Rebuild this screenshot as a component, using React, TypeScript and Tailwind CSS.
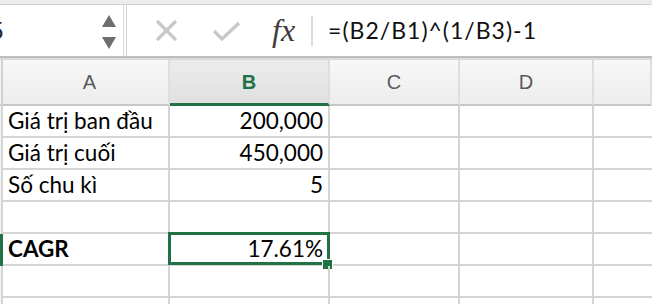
const cellFont = "font-['Lato','Open_Sans',sans-serif]";

const rows: { a: string; b: string; bold?: boolean; selected?: boolean }[] = [
  { a: "Giá trị ban đầu", b: "200,000" },
  { a: "Giá trị cuối", b: "450,000" },
  { a: "Số chu kì", b: "5" },
  { a: "", b: "" },
  { a: "CAGR", b: "17.61%", bold: true, selected: true },
  { a: "", b: "" },
  { a: "", b: "" },
];

function Toolbar() {
  return (
    <div className="flex flex-col">
      <div className="h-[4px] bg-[#ececec]" />
      <div className="flex h-[52px] border-t border-[#d0d0d0] bg-white">
        {/* name box, scrolled so only the tail of the ref shows */}
        <div className="relative flex w-[124px] items-center overflow-hidden border-r border-[#d8d8d8]">
          <span className="ml-[-10px] font-['Liberation_Sans',sans-serif] text-[24px] text-[#222]">5</span>
          <div className="absolute left-[102px] top-[10px] flex flex-col gap-[10px]">
            <svg width="14" height="12" viewBox="0 0 14 12">
              <path d="M7 0 L14 12 L0 12 Z" fill="#6e6e6e" />
            </svg>
            <svg width="14" height="12" viewBox="0 0 14 12">
              <path d="M0 0 L14 0 L7 12 Z" fill="#6e6e6e" />
            </svg>
          </div>
        </div>
        <div className="ml-[2px] flex flex-1 items-center border-l border-[#d8d8d8]">
          <svg className="ml-[28px]" width="23" height="23" viewBox="0 0 23 23">
            <path d="M2 2 L21 21 M21 2 L2 21" stroke="#c8c8c8" strokeWidth="3.2" />
          </svg>
          <svg className="ml-[34px]" width="29" height="22" viewBox="0 0 29 22">
            <path d="M2 11 L10 19 L27 3" stroke="#c8c8c8" strokeWidth="3.4" fill="none" />
          </svg>
          <span className="ml-[31px] mt-[-2px] font-['Liberation_Serif',serif] text-[32px] italic leading-none text-[#3c3c3c]">
            fx
          </span>
          <div className="ml-[16px] h-[30px] w-[2px] bg-[#dcdcdc]" />
          <span className={`ml-[15px] ${cellFont} text-[23px] tracking-[1px] text-[#111]`}>=(B2/B1)^(1/B3)-1</span>
        </div>
      </div>
      <div className="h-[2px] bg-[#bdbdbd]" />
      <div className="h-[2px] bg-[#dadada]" />
    </div>
  );
}

function HeaderCell({ label, w, active, pad }: { label: string; w: string; active?: boolean; pad?: string }) {
  return (
    <div
      className={`${w} flex h-[46px] shrink-0 items-center justify-center border-r-2 border-[#dedede] ${pad ?? ""} ${
        active
          ? "border-b-[3px] border-b-[#217346] bg-gradient-to-b from-[#ececec] to-[#e0e0e0] font-bold text-[#217346]"
          : "border-b-2 border-b-[#c6c6c6] bg-gradient-to-b from-[#f7f7f7] to-[#ededed] text-[#5a5a5a]"
      } font-['Liberation_Sans',sans-serif] text-[20px]`}
    >
      {label}
    </div>
  );
}

export default function App() {
  return (
    <div className="h-[304px] w-[652px] overflow-hidden bg-white">
      <Toolbar />
      <div className="flex">
        <div className="h-[46px] w-[3px] shrink-0 border-r-2 border-b-2 border-[#d0d0d0] bg-[#f4f4f4]" />
        <HeaderCell label="A" w="w-[167px]" pad="pl-[8px]" />
        <HeaderCell label="B" w="w-[160px]" active />
        <HeaderCell label="C" w="w-[130px]" />
        <HeaderCell label="D" w="w-[134px]" />
        <HeaderCell label="" w="flex-1" />
      </div>
      {rows.map((r, i) => (
        <div key={i} className={`flex h-[32px] ${cellFont} text-[22.5px] leading-[28px] text-black`}>
          <div
            className={`w-[3px] shrink-0 border-r-2 ${
              r.selected ? "border-[#217346] bg-[#217346]" : "border-[#d4d4d4] bg-[#f4f4f4]"
            }`}
          />
          <div className={`flex w-[167px] shrink-0 items-end border-r-2 border-b-2 border-[#d4d4d4] pb-[1px] pl-[5px] ${r.bold ? "font-bold" : ""}`}>
            {r.a}
          </div>
          <div className="relative flex w-[160px] shrink-0 items-end justify-end border-r-2 border-b-2 border-[#d4d4d4] pb-[1px] pr-[5px]">
            {r.b}
            {r.selected && (
              <>
                <div className="absolute -top-[2px] -left-[2px] -right-[2px] -bottom-[1px] border-[3px] border-[#217346]" />
                <div className="absolute -right-[5px] -bottom-[6px] h-[11px] w-[11px] border border-white bg-[#217346]" />
              </>
            )}
          </div>
          <div className="w-[130px] shrink-0 border-r-2 border-b-2 border-[#d4d4d4]" />
          <div className="w-[134px] shrink-0 border-r-2 border-b-2 border-[#d4d4d4]" />
          <div className="flex-1 border-b-2 border-[#d4d4d4]" />
        </div>
      ))}
    </div>
  );
}
